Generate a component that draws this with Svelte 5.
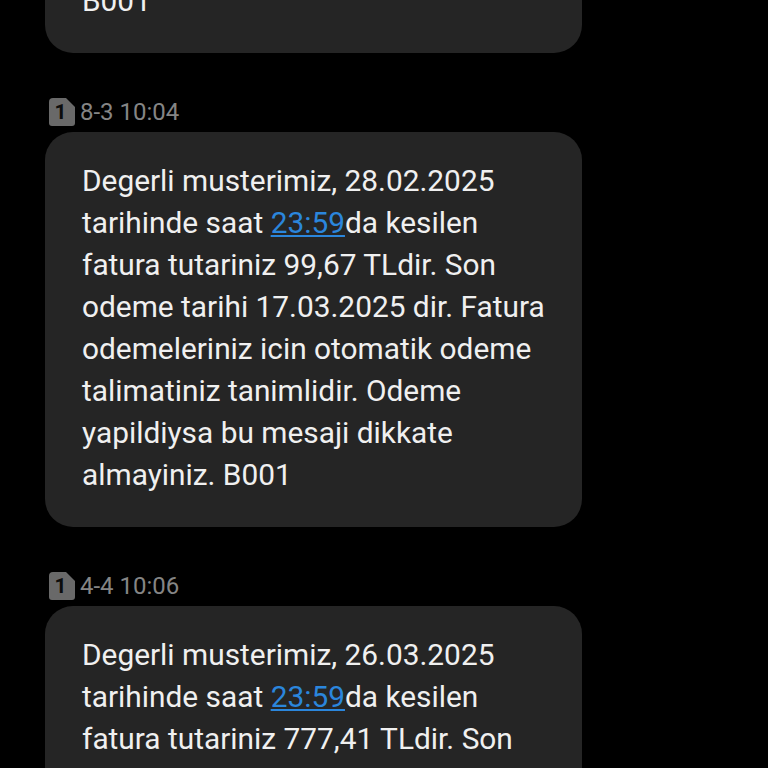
<script lang="ts">
  interface Message {
    date?: string;
    before: string;
    time?: string;
    after?: string;
  }

  const messages: Message[] = [
    { before: 'B001' },
    {
      date: '8-3 10:04',
      before: 'Degerli musterimiz, 28.02.2025 tarihinde saat ',
      time: '23:59',
      after:
        'da kesilen fatura tutariniz 99,67 TLdir. Son odeme tarihi 17.03.2025 dir. Fatura odemeleriniz icin otomatik odeme talimatiniz tanimlidir. Odeme yapildiysa bu mesaji dikkate almayiniz. B001',
    },
    {
      date: '4-4 10:06',
      before: 'Degerli musterimiz, 26.03.2025 tarihinde saat ',
      time: '23:59',
      after:
        'da kesilen fatura tutariniz 777,41 TLdir. Son odeme tarihi 15.04.2025 dir. Fatura odemeleriniz icin otomatik odeme talimatiniz tanimlidir. Odeme yapildiysa bu mesaji dikkate almayiniz. B001',
    },
  ];
</script>

<main class="thread">
  {#each messages as msg}
    <article class="message">
      {#if msg.date}
        <header class="meta">
          <span class="sim">
            <svg width="26" height="29" viewBox="0 0 26 29" aria-hidden="true">
              <path
                d="M4 1H17L26 10V26a3 3 0 0 1-3 3H3a3 3 0 0 1-3-3V5a4 4 0 0 1 4-4Z"
                fill="#696969"
              />
            </svg>
            <b>1</b>
          </span>
          <time>{msg.date}</time>
        </header>
      {/if}
      <p class="bubble">
        {msg.before}{#if msg.time}<a href="#time">{msg.time}</a>{/if}{msg.after ?? ''}
      </p>
    </article>
  {/each}
</main>

<style>
  :global(body) {
    background: #000;
  }

  .thread {
    height: 768px;
    box-sizing: border-box;
    overflow: hidden;
    background: #000;
    padding-left: 45px;
    font-family: Roboto, "Liberation Sans", sans-serif;
  }

  .message {
    width: 537px;
  }

  .message:first-child {
    margin-top: -48px;
  }

  .meta {
    display: flex;
    align-items: center;
    gap: 5px;
    height: 29px;
    margin: 44px 0 6px 4px;
    color: #858585;
    font-size: 24px;
  }

  .sim {
    position: relative;
    display: flex;
    width: 26px;
    height: 29px;
  }

  .sim b {
    position: absolute;
    inset: 0 3px 0 0;
    text-align: center;
    color: #0c0c0c;
    font-size: 21px;
    line-height: 31px;
    font-weight: 700;
  }

  .bubble {
    margin: 0;
    padding: 28px 36px 31px 37px;
    border-radius: 28px;
    background: #252525;
    color: #f0f0f0;
    font-size: 29.85px;
    line-height: 42px;
  }

  .bubble a {
    color: #2b86dc;
    text-decoration: underline;
  }
</style>
